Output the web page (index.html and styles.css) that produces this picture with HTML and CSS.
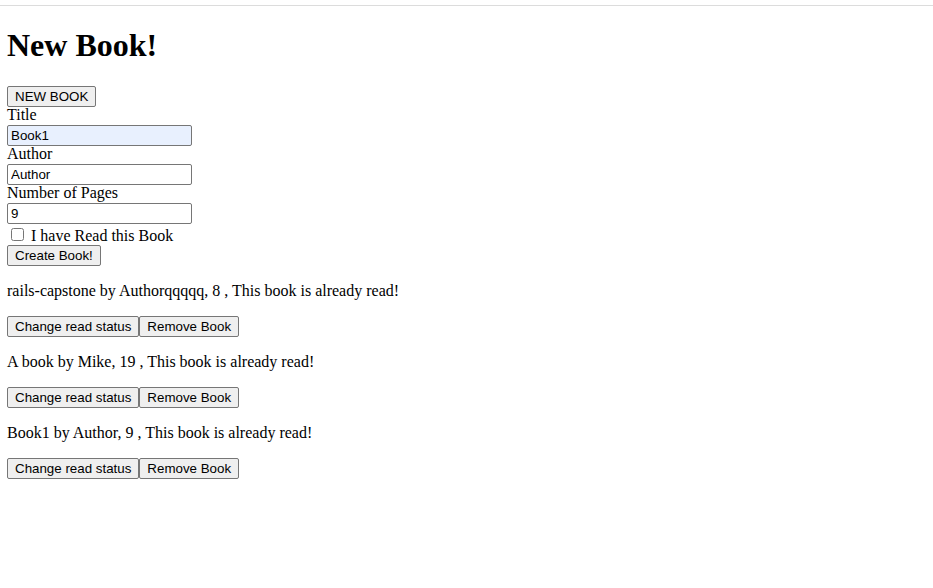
FILE: index.html
```html
<!DOCTYPE html>
<html>
<head>
<meta charset="utf-8">
<title>New Book!</title>
<link rel="stylesheet" href="styles.css">
</head>
<body>
<div class="topbar"></div>
<main class="page">
  <h1 class="title">New Book!</h1>
  <div class="form">
    <button class="btn" type="button">NEW BOOK</button>
    <label class="label" for="t">Title</label>
    <input class="field autofill" id="t" type="text" value="Book1">
    <label class="label" for="a">Author</label>
    <input class="field" id="a" type="text" value="Author">
    <label class="label" for="n">Number of Pages</label>
    <input class="field" id="n" type="text" value="9">
    <div class="check-row"><input class="check" id="r" type="checkbox"> <label class="check-label" for="r">I have Read this Book</label></div>
    <button class="btn" type="button">Create Book!</button>
  </div>
  <div class="books">
    <div class="book">
      <p class="book-text">rails-capstone by Authorqqqqq, 8 , This book is already read!</p>
      <div class="actions"><button class="btn" type="button">Change read status</button><button class="btn" type="button">Remove Book</button></div>
    </div>
    <div class="book">
      <p class="book-text">A book by Mike, 19 , This book is already read!</p>
      <div class="actions"><button class="btn" type="button">Change read status</button><button class="btn" type="button">Remove Book</button></div>
    </div>
    <div class="book">
      <p class="book-text">Book1 by Author, 9 , This book is already read!</p>
      <div class="actions"><button class="btn" type="button">Change read status</button><button class="btn" type="button">Remove Book</button></div>
    </div>
  </div>
</main>
</body>
</html>
```

FILE: styles.css
```css
html, body {
  margin: 0;
  padding: 0;
  background: #fff;
}
body {
  font-family: "Liberation Serif", "Times New Roman", serif;
  font-size: 16px;
  color: #000;
}
.topbar {
  height: 5px;
  border-bottom: 1px solid #dcdcdc;
}
.page {
  padding: 0 7px;
}
.title {
  font-size: 32px;
  font-weight: bold;
  margin: 21.44px 0;
  line-height: normal;
}
.form {
  display: flex;
  flex-direction: column;
  align-items: flex-start;
}
.label {
  display: block;
  line-height: normal;
  margin-top: -1px;
  margin-bottom: 1px;
}
.btn {
  font-family: "Liberation Sans", Arial, sans-serif;
  font-size: 13.333px;
  color: #000;
  background: #efefef;
  border: 1px solid #767676;
  border-radius: 2px;
  padding: 1px 7px;
  margin: 0;
  height: 21px;
  line-height: normal;
}
.field {
  box-sizing: border-box;
  width: 185px;
  height: 21px;
  margin: 0;
  padding: 1px 3px;
  font-family: "Liberation Sans", Arial, sans-serif;
  font-size: 13.333px;
  color: #000;
  background: #fff;
  border: 1px solid #767676;
  border-radius: 2px;
}
.autofill {
  background: #e8f0fe;
}
.check-row {
  display: block;
  line-height: normal;
  margin-top: 1px;
}
.check {
  width: 13px;
  height: 13px;
  margin: 3px 3px 3px 4px;
  vertical-align: baseline;
}
.book-text {
  margin: 16px 0;
  line-height: normal;
}
.actions {
  display: flex;
}
```
